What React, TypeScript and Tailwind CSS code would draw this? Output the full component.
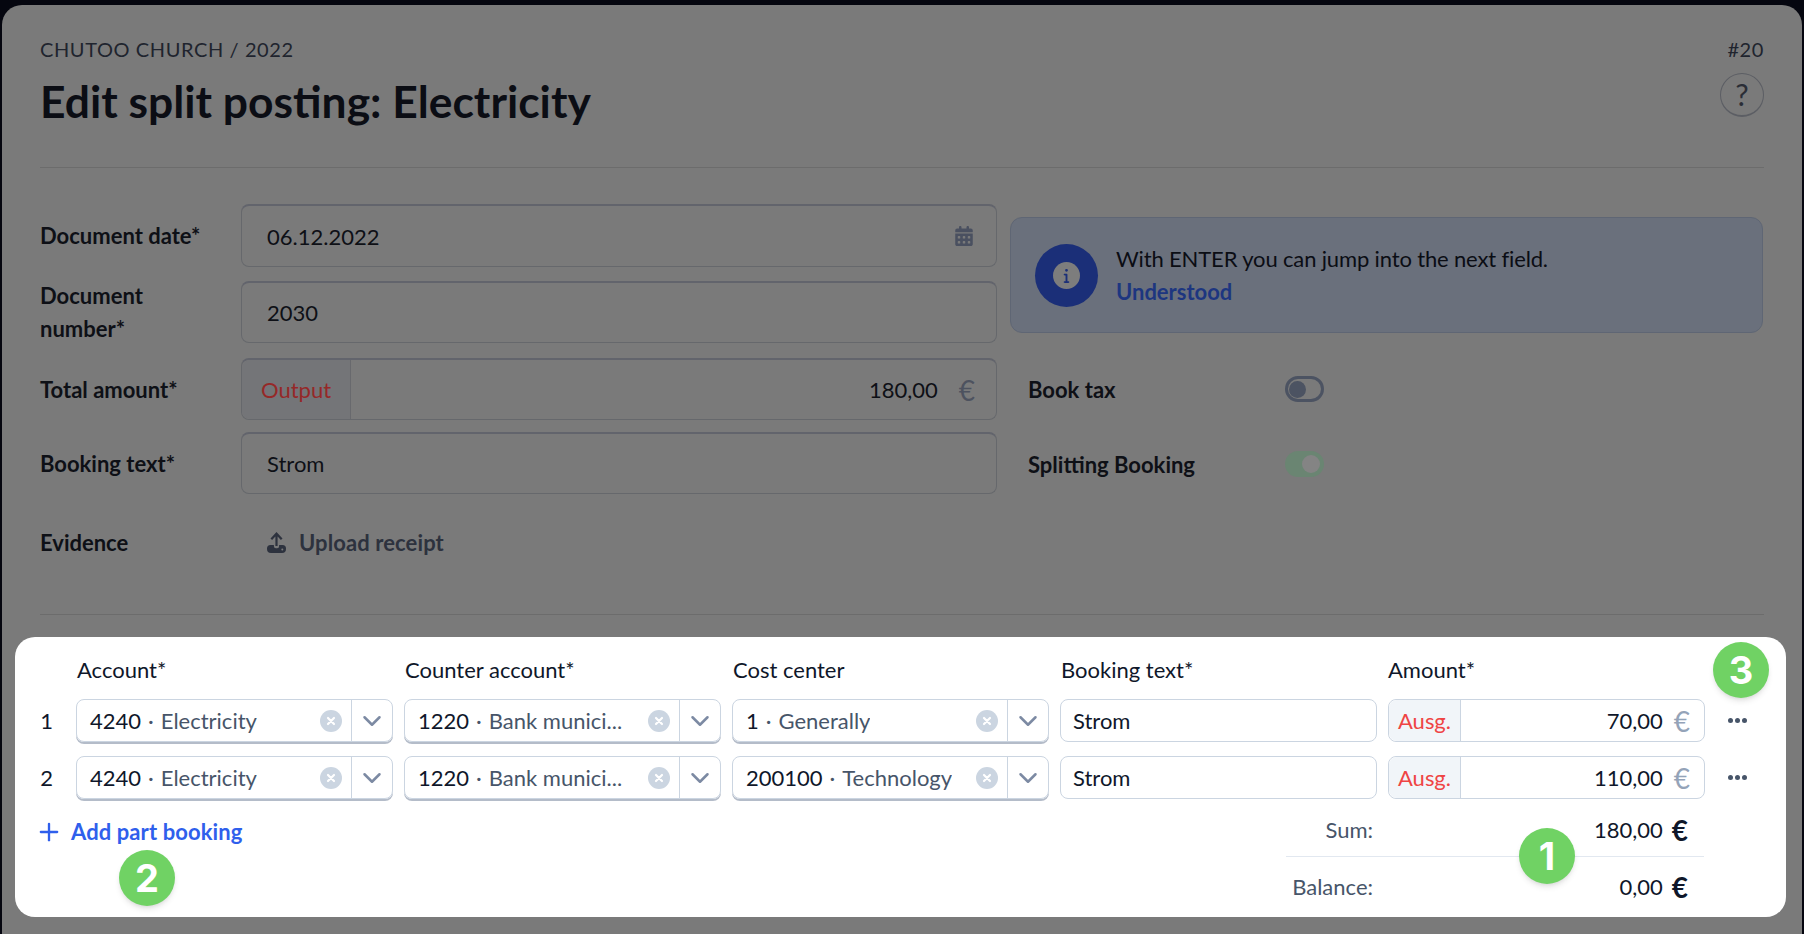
import { ChevronDown, Plus } from "lucide-react";
import { FaCalendarDays, FaInfo } from "react-icons/fa6";

const rows = [
  { no: 1, center: "1", centerName: "Generally", amount: "70,00" },
  { no: 2, center: "200100", centerName: "Technology", amount: "110,00" },
];

function Badge({ n, className }: { n: number; className: string }) {
  return (
    <div
      className={
        "absolute flex h-14 w-14 items-center justify-center rounded-full bg-[#70d264] text-[38px] font-bold text-white shadow-md font-['Inter',sans-serif] " +
        className
      }
    >
      {n}
    </div>
  );
}

function Field({
  label,
  children,
  className = "",
}: {
  label: string;
  children: React.ReactNode;
  className?: string;
}) {
  return (
    <div className={"flex items-center " + className}>
      <div className="w-[201px] shrink-0 pr-[20px] text-[22px] leading-[33px] font-bold text-[#0e1016]">
        {label}
      </div>
      {children}
    </div>
  );
}

function DimInput({ children }: { children: React.ReactNode }) {
  return (
    <div className="flex h-full w-[756px] items-center rounded-lg border border-[#66686c] border-t-2 border-t-[#62646c] px-[25px] text-[22px] text-[#0e1016]">
      {children}
    </div>
  );
}

function Select({ code, name }: { code: string; name: string }) {
  return (
    <div className="flex h-[43px] w-[317px] shrink-0 items-center rounded-lg border border-[#cbd5e1] shadow-[0_2px_0_#b4bcc9]">
      <div className="flex min-w-0 flex-1 items-center pl-[13px] text-[22px]">
        <span className="text-[#0f172a]">{code}</span>
        <span className="mx-[7px] text-[#475569]">·</span>
        <span className="truncate text-[#475569]">{name}</span>
      </div>
      <div className="mx-[9px] flex h-[22px] w-[22px] shrink-0 items-center justify-center rounded-full bg-[#cbd5e1]">
        <svg viewBox="0 0 10 10" className="h-[10px] w-[10px]" stroke="#fff" strokeWidth="2.2" strokeLinecap="round">
          <path d="M2 2l6 6M8 2l-6 6" />
        </svg>
      </div>
      <div className="flex h-full w-[41px] shrink-0 items-center justify-center border-l border-[#cbd5e1] text-[#7c8aa3]">
        <ChevronDown size={30} strokeWidth={2} />
      </div>
    </div>
  );
}

export default function App() {
  return (
    <div className="h-[934px] overflow-hidden bg-[#05060f] px-[2px] pt-[5px] font-['Lato',sans-serif]">
      <div className="relative h-[929px] rounded-t-[20px] bg-[#7a7a7a] px-[38px] pt-[33px]">
        <div className="flex items-start justify-between">
          <div>
            <div className="text-[20px] leading-[22px] tracking-[0.6px] text-[#20242e] uppercase">
              Chutoo Church / 2022
            </div>
            <h1 className="mt-[13px] text-[44.4px] leading-[56px] font-bold text-[#0b0d14]">
              Edit split posting: Electricity
            </h1>
          </div>
          <div className="flex flex-col items-end">
            <div className="text-[20px] leading-[22px] tracking-[0.6px] text-[#20242e]">#20</div>
            <div className="mt-[13px] flex h-[44px] w-[44px] items-center justify-center rounded-full border border-[#5c5e64] border-b-2 text-[30px] text-[#2a2d36]">
              ?
            </div>
          </div>
        </div>

        <div className="mt-[38px] h-px bg-[#6c6c6c]" />

        <div className="mt-[36px] flex gap-[13px]">
          <div className="flex w-[957px] shrink-0 flex-col">
            <Field label="Document date*" className="h-[63px]">
              <DimInput>
                <span className="flex-1">06.12.2022</span>
                <FaCalendarDays className="-mr-[3px] text-[#4a5060]" size={20} />
              </DimInput>
            </Field>
            <Field label="Document number*" className="mt-[14px] h-[62px]">
              <DimInput>2030</DimInput>
            </Field>
            <Field label="Total amount*" className="mt-[15px] h-[62px]">
              <div className="flex h-full w-[756px] items-center rounded-lg border border-[#66686c] border-t-2 border-t-[#62646c] text-[22px]">
                <div className="flex h-full w-[109px] shrink-0 items-center justify-center rounded-l-lg border-r border-[#68696d] bg-[#747578] text-[#962828]">
                  Output
                </div>
                <div className="flex-1 pr-[21px] text-right text-[#0e1016]">180,00</div>
                <span className="mr-[21px] text-[28px] leading-none text-[#4d525f]">€</span>
              </div>
            </Field>
            <Field label="Booking text*" className="mt-[12px] h-[62px]">
              <DimInput>Strom</DimInput>
            </Field>
            <Field label="Evidence" className="mt-[32px] h-[33px]">
              <div className="flex items-center pl-[26px] text-[22px] font-bold tracking-[0.1px] text-[#2d323e]">
                <svg viewBox="0 0 19 21" className="mr-[13px] h-[21px] w-[19px]" fill="#2d323e">
                  <path d="M9.5 0l6 6.5-1.6 1.4-3.3-3.4V14H8.4V4.5L5.1 7.9 3.5 6.5z" />
                  <path d="M3.5 13h3.4v1.2a2 2 0 0 0 2 2h1.2a2 2 0 0 0 2-2V13h3.4a3.5 3.5 0 0 1 3.5 3.5v.5a4 4 0 0 1-4 4H4a4 4 0 0 1-4-4v-.5A3.5 3.5 0 0 1 3.5 13z" />
                  <circle cx="15.3" cy="17.6" r="1" fill="#7a7a7a" />
                </svg>
                Upload receipt
              </div>
            </Field>
          </div>

          <div className="flex-1 pr-[1px]">
            <div className="mt-[13px] flex h-[116px] items-center rounded-xl border border-[#5f6674] bg-[#6a707c] pl-[24px]">
              <div className="flex h-[63px] w-[63px] items-center justify-center rounded-full bg-[#1b2f78]">
                <div className="flex h-[27px] w-[27px] items-center justify-center rounded-full bg-[#7d7d7d] text-[#1b2f78]">
                  <FaInfo size={15} />
                </div>
              </div>
              <div className="ml-[18px] text-[22px] leading-[33px]">
                <div className="tracking-[-0.15px] text-[#0b0d14]">
                  With ENTER you can jump into the next field.
                </div>
                <div className="font-bold text-[#1d3680]">Understood</div>
              </div>
            </div>
            <div className="mt-[25px] flex h-[62px] items-center pl-[18px]">
              <div className="w-[257px] text-[22px] font-bold text-[#0e1016]">Book tax</div>
              <div className="flex h-[26px] w-[39px] items-center rounded-full border-[3px] border-[#4c5362] pl-[1px]">
                <div className="h-[17px] w-[17px] rounded-full bg-[#4c5362]" />
              </div>
            </div>
            <div className="mt-[13px] flex h-[62px] items-center pl-[18px]">
              <div className="w-[257px] text-[22px] font-bold text-[#0e1016]">Splitting Booking</div>
              <div className="flex h-[26px] w-[39px] items-center justify-end rounded-full bg-[#6a8572] pr-[4px]">
                <div className="h-[18px] w-[18px] rounded-full bg-[#848484]" />
              </div>
            </div>
          </div>
        </div>

        <div className="mt-[55px] h-px bg-[#6c6c6c]" />

        <div className="relative -mx-[25px] mt-[22px] h-[280px] w-[1771px] rounded-[20px] bg-white">
          <div className="flex h-[62px] items-center pt-[2px] pl-[62px] text-[22px] text-[#0f172a]">
            <div className="w-[328px]">Account*</div>
            <div className="w-[328px]">Counter account*</div>
            <div className="w-[328px]">Cost center</div>
            <div className="w-[327px]">Booking text*</div>
            <div>Amount*</div>
          </div>

          <div className="flex flex-col gap-[14px]">
            {rows.map((r) => (
              <div key={r.no} className="flex items-center gap-[11px] text-[22px]">
                <div className="w-[50px] shrink-0 pr-[12px] text-right text-[#0f172a]">{r.no}</div>
                <Select code="4240" name="Electricity" />
                <Select code="1220" name="Bank munici..." />
                <Select code={r.center} name={r.centerName} />
                <div className="flex h-[43px] w-[317px] shrink-0 items-center rounded-lg border border-[#cbd5e1] pl-[12px] text-[#0f172a]">
                  Strom
                </div>
                <div className="flex h-[43px] w-[317px] shrink-0 items-center rounded-lg border border-[#cbd5e1]">
                  <div className="flex h-full w-[72px] shrink-0 items-center justify-center rounded-l-lg border-r border-[#cbd5e1] bg-[#f1f5f9] text-[#ef4444]">
                    Ausg.
                  </div>
                  <div className="flex-1 pr-[11px] text-right text-[#0f172a]">{r.amount}</div>
                  <span className="mr-[14px] text-[28px] leading-none text-[#94a3b8]">€</span>
                </div>
                <div className="ml-[12px] flex gap-[2px]">
                  <span className="h-[5px] w-[5px] rounded-full bg-[#475569]" />
                  <span className="h-[5px] w-[5px] rounded-full bg-[#475569]" />
                  <span className="h-[5px] w-[5px] rounded-full bg-[#475569]" />
                </div>
              </div>
            ))}
          </div>

          <div className="flex items-start justify-between pr-[82px]">
            <div className="mt-[16px] ml-[20px] flex items-center gap-[8px] text-[22px] font-bold tracking-[0.1px] text-[#2f5fec]">
              <Plus size={28} strokeWidth={2} />
              Add part booking
            </div>
            <div className="w-[418px] text-[22px]">
              <div className="flex h-[58px] items-center border-b border-[#e2e8f0] pt-[4px]">
                <div className="w-[87px] text-right text-[#475569]">Sum:</div>
                <div className="flex-1 text-right text-[#0f172a]">180,00</div>
                <span className="mr-[16px] ml-[9px] text-[28px] leading-none font-bold text-[#0f172a]">€</span>
              </div>
              <div className="flex h-[59px] items-center">
                <div className="w-[87px] text-right text-[#475569]">Balance:</div>
                <div className="flex-1 text-right text-[#0f172a]">0,00</div>
                <span className="mr-[16px] ml-[9px] text-[28px] leading-none font-bold text-[#0f172a]">€</span>
              </div>
            </div>
          </div>

          <Badge n={1} className="top-[191px] left-[1504px]" />
          <Badge n={2} className="top-[213px] left-[104px]" />
          <Badge n={3} className="top-[5px] left-[1698px]" />
        </div>
      </div>
    </div>
  );
}
